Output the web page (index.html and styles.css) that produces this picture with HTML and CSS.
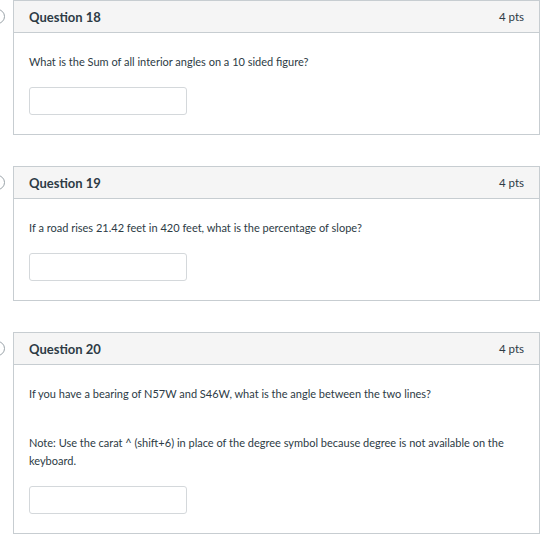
FILE: index.html
```
<html lang="en">
  <head>
    <meta charset="UTF-8" />
    <meta name="viewport" content="width=device-width, initial-scale=1.0" />
    <title>Quiz</title>

    <link rel="stylesheet" href="styles.css">
  </head>
  <body>
    <div class="quiz">
      <div class="question">
        <span class="marker"></span>
        <div class="header">
          <span class="name">Question 18</span>
          <span class="pts">4 pts</span>
        </div>
        <div class="body">
          <div class="text">
            <p>What is the Sum of all interior angles on a 10 sided figure?</p>
          </div>
          <input type="text" class="answer" />
        </div>
      </div>

      <div class="question">
        <span class="marker"></span>
        <div class="header">
          <span class="name">Question 19</span>
          <span class="pts">4 pts</span>
        </div>
        <div class="body">
          <div class="text">
            <p>If a road rises 21.42 feet in 420 feet, what is the percentage of slope?</p>
          </div>
          <input type="text" class="answer" />
        </div>
      </div>

      <div class="question">
        <span class="marker"></span>
        <div class="header">
          <span class="name">Question 20</span>
          <span class="pts">4 pts</span>
        </div>
        <div class="body">
          <div class="text">
            <p>If you have a bearing of N57W and S46W, what is the angle between the two lines?</p>
            <p>Note: Use the carat ^ (shift+6) in place of the degree symbol because degree is not available on the keyboard.</p>
          </div>
          <input type="text" class="answer" />
        </div>
      </div>
    </div>
  </body>
</html>
```

FILE: styles.css
```
*,
*::after,
*::before {
  margin: 0;
  padding: 0;
  box-sizing: border-box;
}

:root {
  --text: #2d3b45;
  --border: #c7cdd1;
  --header-bg: #f5f5f5;
}

body {
  font-family: Lato, "Noto Sans", sans-serif;
  color: var(--text);
  background: #fff;
}

.quiz {
  margin-left: 13px;
  width: 527px;
  display: flex;
  flex-direction: column;
  gap: 31px;
}

.question {
  position: relative;
  border: 1px solid var(--border);
}

.marker {
  position: absolute;
  left: -24px;
  top: 8px;
  width: 15px;
  height: 15px;
  border: 1px solid #9aa3a9;
  border-radius: 50%;
  background: #fff;
}

.header {
  height: 32px;
  display: flex;
  justify-content: space-between;
  align-items: center;
  padding: 0 15px;
  background: var(--header-bg);
  border-bottom: 1px solid var(--border);
}

.name {
  font-size: 13px;
  font-weight: 700;
}

.pts {
  font-size: 11.5px;
}

.body {
  padding: 20px 15px 19px;
}

.text p {
  font-size: 11px;
  line-height: 18px;
  margin-bottom: 31px;
}

.text p:last-child {
  margin-bottom: 0;
}

.answer {
  display: block;
  margin-top: 16px;
  width: 158px;
  height: 28px;
  border: 1px solid #d4d8db;
  border-radius: 3px;
  background: #fff;
  outline: none;
}
```
